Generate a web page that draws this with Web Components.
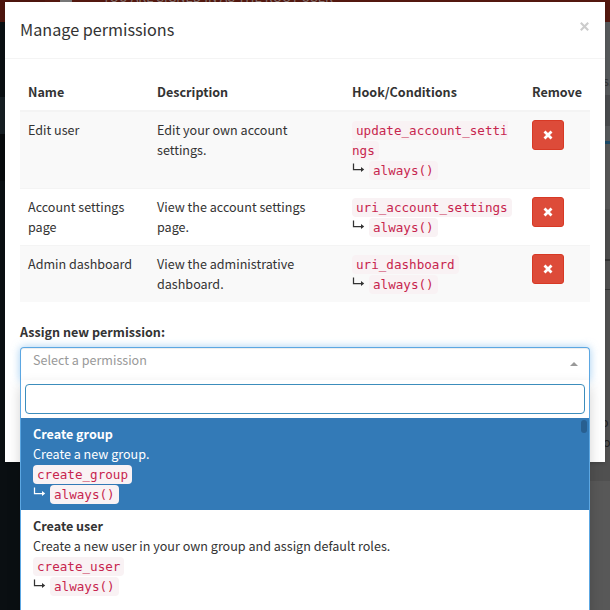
<!DOCTYPE html>
<html lang="en">
<head>
<meta charset="utf-8">
<title>Manage permissions</title>
<style>
html,body{margin:0;height:100%;overflow:hidden}
body{font:12.57px/20px "Noto Sans CJK SC","Source Sans Pro",sans-serif;color:#333;background:#555}
</style>
</head>
<body>
<permission-page></permission-page>
<script>
function define(name, markup) {
  const t = document.createElement('template');
  t.innerHTML = markup;
  customElements.define(name, class extends HTMLElement {
    constructor() {
      super();
      this.attachShadow({mode: 'open'}).append(t.content.cloneNode(true));
    }
  });
}

define('code-tag', `<style>
:host{display:inline}
code{font:12.6px/16px "DejaVu Sans Mono",monospace;color:#c7254e;background:var(--code-bg,#f9f2f4);padding:2px 4px;border-radius:4px;overflow-wrap:anywhere}
</style><code><slot></slot></code>`);

define('hook-conditions', `<style>
:host{display:block}
div{height:20px;white-space:nowrap;display:flex}
p{margin:0;line-height:20px}
svg{width:17px;height:20px;flex:none;fill:none;stroke:currentColor}
</style><p><code-tag><slot></slot></code-tag></p>
<div><svg viewBox="0 0 17 20"><path d="M1.5 3.5V9.5H10.5" stroke-width="1.25"/><path d="M9 7l3.2 2.5-3.2 2.5z" fill="currentColor" stroke="none"/></svg><p><code-tag>always()</code-tag></p></div>`);

define('remove-button', `<style>
:host{display:block}
button{box-sizing:border-box;display:flex;align-items:center;justify-content:center;width:32px;height:30px;padding:0;border:1px solid #d73925;border-radius:3px;background:#dd4b39}
svg{width:10px;height:10px;stroke:#fff;stroke-width:2.8;fill:none}
</style><button aria-label="Remove"><svg viewBox="0 0 10 10"><path d="M1.5 1.5l7 7m0-7l-7 7"/></svg></button>`);

define('permission-row', `<style>
:host{display:grid;grid-template-columns:129px 195px 180px 66px;border-top:1px solid #f4f4f4}
:host([shade]){background:#f9f9f9}
.c{padding:8px;min-width:0}
.d{padding-right:20px}
.h{padding-right:10px}
</style><div class="c"><slot name="name"></slot></div><div class="c d"><slot name="description"></slot></div>
<div class="c h"><slot name="hook"></slot></div><div class="c"><remove-button></remove-button></div>`);

define('permission-table', `<style>
:host{display:block}
header{display:grid;grid-template-columns:129px 195px 180px 66px;font-weight:700;border-bottom:1px solid #f4f4f4;height:36px;align-items:center}
span{padding-left:8px}
</style><header><span>Name</span><span>Description</span><span>Hook/Conditions</span><span>Remove</span></header><slot></slot>`);

define('permission-option', `<style>
:host{display:block;padding:6px 12px}
:host([active]){background:#337ab7;color:#fff}
b{display:block;font-weight:700}
p{margin:0}
</style><b><slot name="title"></slot></b><p><slot name="description"></slot></p><slot></slot>`);

define('permission-select', `<style>
:host{display:block;position:relative}
.field{box-sizing:border-box;height:34px;border:1px solid #5ca7e2;border-bottom:0;border-radius:4px 4px 0 0;padding:0 11px 10px 12px;display:flex;justify-content:space-between;align-items:center;color:#999;box-shadow:inset 0 1px 1px rgba(0,0,0,.075),0 0 8px rgba(102,175,233,.6)}
.field i{border:solid transparent;border-width:0 4px 4px;border-bottom-color:#999;margin-top:9px}
.drop{box-sizing:border-box;position:absolute;top:33px;left:0;width:100%;height:260px;background:#fff;border:1px solid #5ca7e2;border-top:0;box-shadow:0 6px 12px rgba(0,0,0,.175)}
.search{padding:4px}
input{box-sizing:border-box;display:block;width:100%;height:30px;border:1px solid #3c8dbc;border-radius:4px;outline:0;background:#fff}
.list{position:relative}
.thumb{position:absolute;right:2px;top:2px;width:6px;height:13px;border-radius:3px;background:#285f90}
</style><div class="field"><span>Select a permission</span><i></i></div>
<div class="drop"><div class="search"><input aria-label="Search"></div><div class="list"><slot></slot><div class="thumb"></div></div></div>`);

define('modal-dialog', `<style>
:host{display:block;box-sizing:border-box;width:600px;height:460px;margin:2px 0 0 5px;background:#fff;box-shadow:0 2px 3px rgba(0,0,0,.125)}
header{display:flex;box-sizing:border-box;height:57px;padding:15px 16px 15px 15px;justify-content:space-between;border-bottom:1px solid #f4f4f4}
h4{margin:0;font-size:16.2px;line-height:24px;font-weight:400}
svg{width:9px;height:9px;margin-top:5px;stroke:#ccc;stroke-width:2.1;fill:none}
main{padding:15px}
</style><header><h4><slot name="title"></slot></h4><svg viewBox="0 0 9 9"><path d="M.8.8l7.4 7.4m0-7.4L.8 8.2"/></svg></header><main><slot></slot></main>`);

define('page-backdrop', `<style>
:host{display:flex;flex-direction:column;width:610px;height:610px;overflow:hidden}
.bar{height:22px;flex:none;background:linear-gradient(90deg,#4d150e 0 45px,#53180f 45px);color:#857270;overflow:hidden}
.bar span{display:block;margin:-13px 0 0 103px;line-height:20px;white-space:nowrap}
.bar span::before{content:"";display:block;position:relative;left:-43px;top:13px;width:12px;height:2px;margin-bottom:-2px;background:#777}
.rest{flex:1;display:flex;justify-content:space-between}
.left{width:45px;background:linear-gradient(#0a0f12 0 75px,#161e22 75px 112px,#070a0c 112px 159px,#0a0f12 159px)}
.right{width:30px;background:linear-gradient(#55585a 0 73px,#484a4c 73px 104px,#55585a 104px 119px,#1b4a67 119px 122px,#555 122px 187px,#4c4c4c 187px 237px,#333 237px 239px,#4f4f4f 239px 267px,#333 267px 268px,#505050 268px 459px,#585858 459px)}
.right div{box-sizing:border-box;height:588px;padding-left:24px;overflow:hidden;display:flex;flex-direction:column;color:#222}
.right span{line-height:20px}
.a{margin-top:49px;margin-left:-1px;color:#333}
.b{margin:321px 0 0 -3px}.c{margin-left:-1px}
</style><div class="bar"><span>YOU ARE SIGNED IN AS THE ROOT USER</span></div>
<div class="rest"><div class="left"></div><div class="right"><div><span class="a">s.</span><span class="b">o</span><span class="c">o</span></div></div></div>`);

define('permission-page', `<style>
:host{display:grid;width:610px;height:610px;overflow:hidden}
page-backdrop,modal-dialog{grid-area:1/1}
label{display:block;margin-top:20px;height:25px;font-weight:700}
</style><page-backdrop></page-backdrop>
<modal-dialog><span slot="title">Manage permissions</span>
<permission-table>
<permission-row shade><span slot="name">Edit user</span><span slot="description">Edit your own account settings.</span><hook-conditions slot="hook">update_account_settings</hook-conditions></permission-row>
<permission-row><span slot="name">Account settings page</span><span slot="description">View the account settings page.</span><hook-conditions slot="hook">uri_account_settings</hook-conditions></permission-row>
<permission-row shade><span slot="name">Admin dashboard</span><span slot="description">View the administrative dashboard.</span><hook-conditions slot="hook">uri_dashboard</hook-conditions></permission-row>
</permission-table>
<label>Assign new permission:</label>
<permission-select>
<permission-option active><span slot="title">Create group</span><span slot="description">Create a new group.</span><hook-conditions>create_group</hook-conditions></permission-option>
<permission-option><span slot="title">Create user</span><span slot="description">Create a new user in your own group and assign default roles.</span><hook-conditions>create_user</hook-conditions></permission-option>
</permission-select>
</modal-dialog>`);
</script>
</body>
</html>
